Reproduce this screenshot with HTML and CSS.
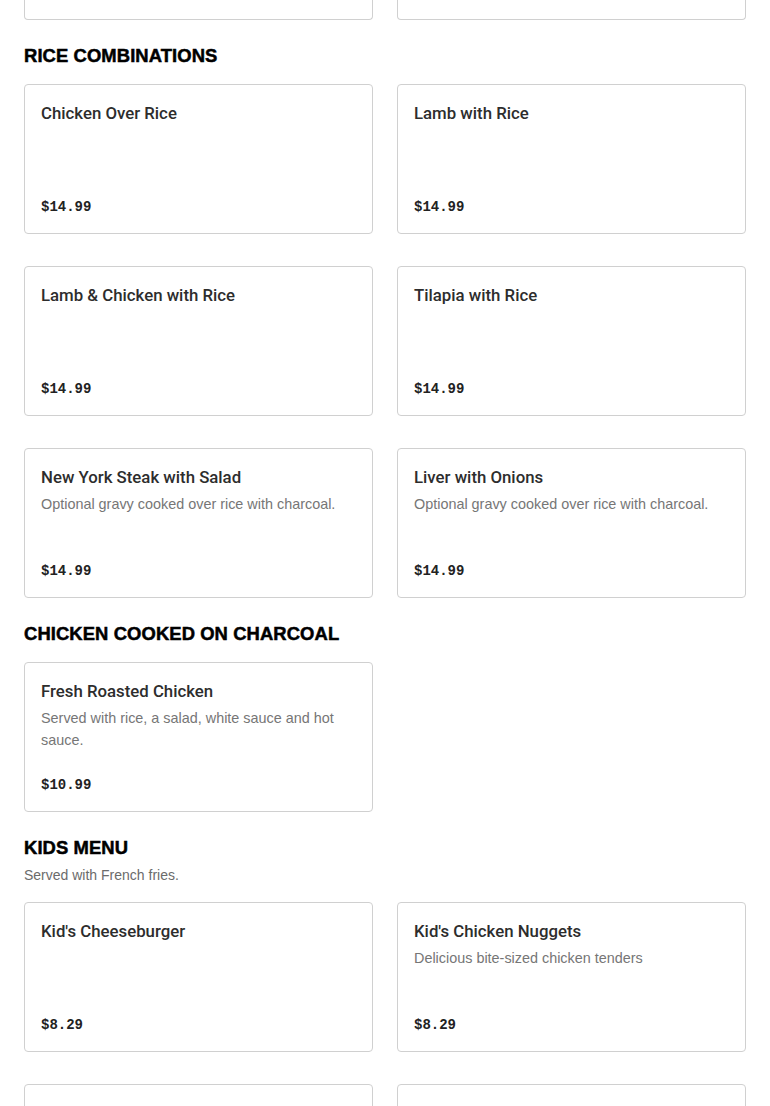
FILE: index.html
```html
<!DOCTYPE html>
<html lang="en">
<head>
<meta charset="utf-8">
<title>Menu</title>
<link rel="stylesheet" href="styles.css">
</head>
<body>
<main class="menu">
  <div class="grid">
    <div class="card partial"></div>
    <div class="card partial"></div>
  </div>

  <section class="section">
    <h2 class="section-title">RICE COMBINATIONS</h2>
    <div class="grid">
      <article class="card">
        <h3 class="item-name">Chicken Over Rice</h3>
        <p class="price">$14.99</p>
      </article>
      <article class="card">
        <h3 class="item-name">Lamb with Rice</h3>
        <p class="price">$14.99</p>
      </article>
      <article class="card">
        <h3 class="item-name">Lamb &amp; Chicken with Rice</h3>
        <p class="price">$14.99</p>
      </article>
      <article class="card">
        <h3 class="item-name">Tilapia with Rice</h3>
        <p class="price">$14.99</p>
      </article>
      <article class="card">
        <h3 class="item-name">New York Steak with Salad</h3>
        <p class="item-desc">Optional gravy cooked over rice with charcoal.</p>
        <p class="price">$14.99</p>
      </article>
      <article class="card">
        <h3 class="item-name">Liver with Onions</h3>
        <p class="item-desc">Optional gravy cooked over rice with charcoal.</p>
        <p class="price">$14.99</p>
      </article>
    </div>
  </section>

  <section class="section">
    <h2 class="section-title">CHICKEN COOKED ON CHARCOAL</h2>
    <div class="grid">
      <article class="card">
        <h3 class="item-name">Fresh Roasted Chicken</h3>
        <p class="item-desc">Served with rice, a salad, white sauce and hot sauce.</p>
        <p class="price">$10.99</p>
      </article>
    </div>
  </section>

  <section class="section">
    <h2 class="section-title">KIDS MENU</h2>
    <p class="section-desc">Served with French fries.</p>
    <div class="grid">
      <article class="card">
        <h3 class="item-name">Kid's Cheeseburger</h3>
        <p class="price">$8.29</p>
      </article>
      <article class="card">
        <h3 class="item-name">Kid's Chicken Nuggets</h3>
        <p class="item-desc">Delicious bite-sized chicken tenders</p>
        <p class="price">$8.29</p>
      </article>
      <article class="card">
        <h3 class="item-name">Kid's Grilled Cheese</h3>
        <p class="price">$8.29</p>
      </article>
      <article class="card">
        <h3 class="item-name">Kid's Chicken Tenders</h3>
        <p class="price">$8.29</p>
      </article>
    </div>
  </section>
</main>
</body>
</html>
```
FILE: styles.css
```css
html, body {
  margin: 0;
  padding: 0;
  background: #ffffff;
}

body {
  font-family: "Liberation Sans", Arial, sans-serif;
  color: #2d2d2d;
  overflow: hidden;
}

.menu {
  padding: 0 24px;
}

.grid {
  display: grid;
  grid-template-columns: 1fr 1fr;
  column-gap: 24px;
  row-gap: 32px;
}

.card {
  box-sizing: border-box;
  min-height: 150px;
  border: 1px solid #d0d0d0;
  border-radius: 4px;
  padding: 16px 16px 14px;
  display: flex;
  flex-direction: column;
  background: #fff;
}

.card.partial {
  min-height: 0;
  height: 20px;
  padding: 0;
  border-top: none;
  border-radius: 0 0 4px 4px;
}

.section {
  padding-top: 24px;
}

.section-title {
  margin: 0 0 16px;
  font-family: "Liberation Sans", Arial, sans-serif;
  font-weight: 900;
  font-size: 18.4px;
  line-height: 24px;
  color: #000;
  -webkit-text-stroke: 0.5px #000;
  letter-spacing: 0.1px;
}

.section-desc {
  margin: -12px 0 16px;
  font-size: 14px;
  line-height: 22px;
  color: #6b6b6b;
}

.item-name {
  margin: 0;
  font-family: Roboto, "Liberation Sans", Arial, sans-serif;
  font-weight: 500;
  font-size: 16.8px;
  line-height: 24px;
  color: #2d2d2d;
}

.item-desc {
  margin: 4px 0 0;
  font-size: 14.4px;
  line-height: 22px;
  color: #767676;
}

.price {
  margin: auto 0 0;
  padding-top: 22px;
  font-family: "Liberation Mono", "Courier New", monospace;
  font-weight: 700;
  font-size: 14px;
  line-height: 24px;
  color: #222;
}
```
